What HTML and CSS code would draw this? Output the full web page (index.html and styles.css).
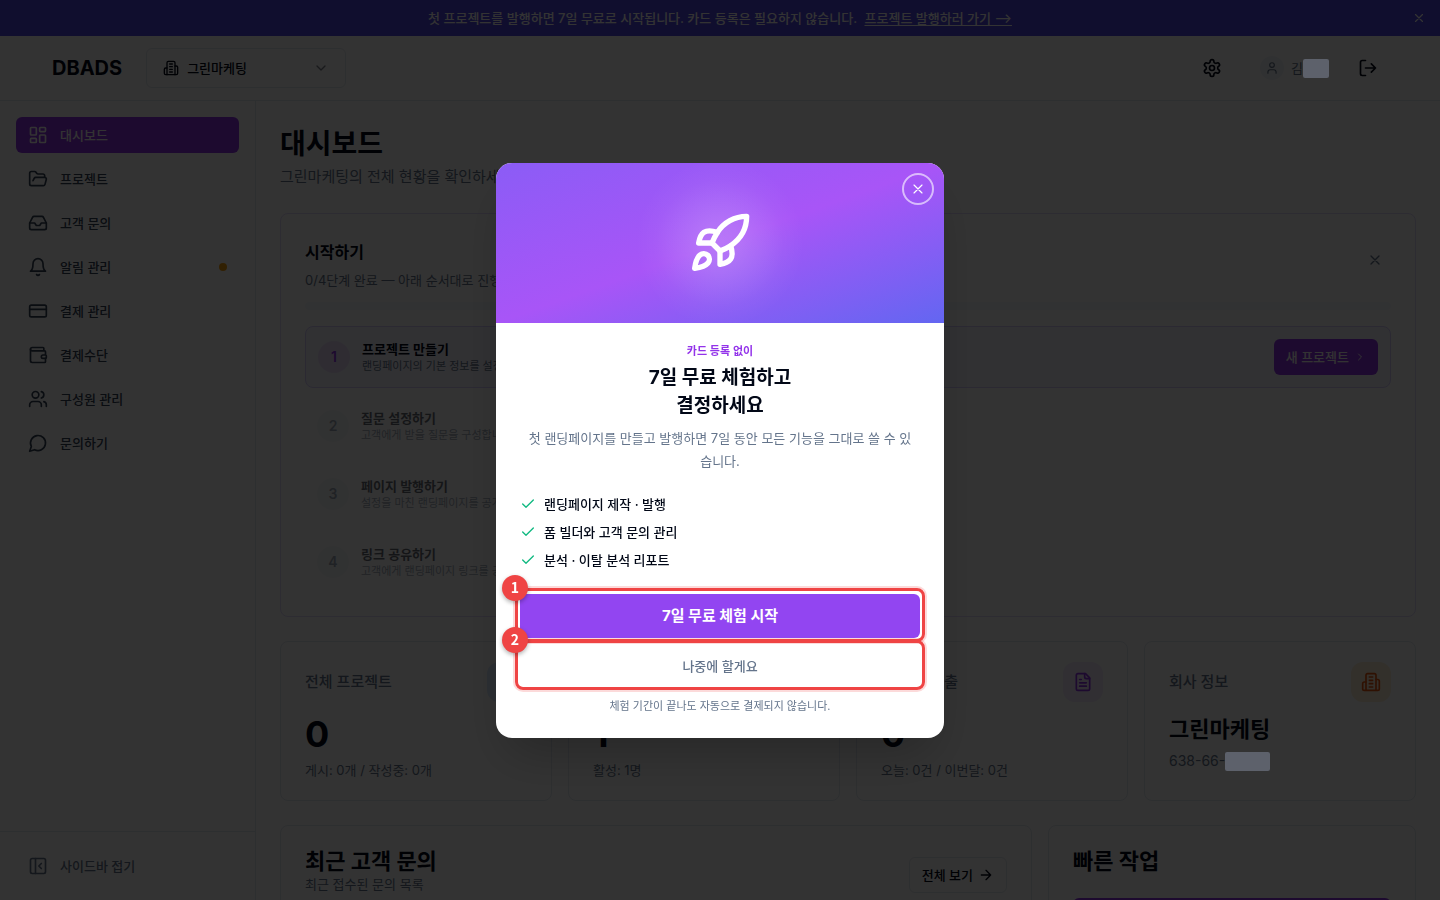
FILE: index.html
```html
<!DOCTYPE html>
<html lang="ko">
<head>
<meta charset="utf-8">
<meta name="viewport" content="width=device-width, initial-scale=1">
<title>DBADS 대시보드</title>
<link rel="stylesheet" href="styles.css">
</head>
<body>
<svg class="sprite" aria-hidden="true">
  <symbol id="i-x" viewBox="0 0 24 24"><path d="M18 6 6 18M6 6l12 12"/></symbol>
  <symbol id="i-building" viewBox="0 0 24 24"><path d="M6 22V4a2 2 0 0 1 2-2h8a2 2 0 0 1 2 2v18Z"/><path d="M6 12H4a2 2 0 0 0-2 2v6a2 2 0 0 0 2 2h2M18 9h2a2 2 0 0 1 2 2v9a2 2 0 0 1-2 2h-2M10 6h4M10 10h4M10 14h4M10 18h4"/></symbol>
  <symbol id="i-rocket" viewBox="0 0 24 24"><path d="M4.5 16.5c-1.5 1.26-2 5-2 5s3.74-.5 5-2c.71-.84.7-2.13-.09-2.91a2.18 2.18 0 0 0-2.91-.09z"/><path d="m12 15-3-3a22 22 0 0 1 2-3.95A12.88 12.88 0 0 1 22 2c0 2.72-.78 7.5-6 11a22.35 22.35 0 0 1-4 2z"/><path d="M9 12H4s.55-3.03 2-4c1.62-1.08 5 0 5 0M12 15v5s3.03-.55 4-2c1.08-1.62 0-5 0-5"/></symbol>
  <symbol id="i-check" viewBox="0 0 24 24"><path d="M20 6 9 17l-5-5"/></symbol>
</svg>

<div class="page">
  <div class="banner">
    <p class="banner-text">첫 프로젝트를 발행하면 7일 무료로 시작됩니다. 카드 등록은 필요하지 않습니다. <a href="#">프로젝트 발행하러 가기 ⟶</a></p>
    <button class="banner-close" aria-label="배너 닫기"><svg class="icon s14"><use href="#i-x"/></svg></button>
  </div>

  <header class="topbar">
    <a class="logo" href="#">DBADS</a>
    <button class="company">
      <svg class="icon s16"><use href="#i-building"/></svg>
      <span>그린마케팅</span>
      <svg class="icon s16 chevron" viewBox="0 0 24 24"><path d="m6 9 6 6 6-6"/></svg>
    </button>
    <div class="tools">
      <button class="tool" aria-label="설정"><svg class="icon s20" viewBox="0 0 24 24"><path d="M12.22 2h-.44a2 2 0 0 0-2 2v.18a2 2 0 0 1-1 1.73l-.43.25a2 2 0 0 1-2 0l-.15-.08a2 2 0 0 0-2.73.73l-.22.38a2 2 0 0 0 .73 2.73l.15.1a2 2 0 0 1 1 1.72v.51a2 2 0 0 1-1 1.74l-.15.09a2 2 0 0 0-.73 2.73l.22.38a2 2 0 0 0 2.73.73l.15-.08a2 2 0 0 1 2 0l.43.25a2 2 0 0 1 1 1.73V20a2 2 0 0 0 2 2h.44a2 2 0 0 0 2-2v-.18a2 2 0 0 1 1-1.73l.43-.25a2 2 0 0 1 2 0l.15.08a2 2 0 0 0 2.73-.73l.22-.39a2 2 0 0 0-.73-2.73l-.15-.08a2 2 0 0 1-1-1.74v-.5a2 2 0 0 1 1-1.74l.15-.09a2 2 0 0 0 .73-2.73l-.22-.38a2 2 0 0 0-2.73-.73l-.15.08a2 2 0 0 1-2 0l-.43-.25a2 2 0 0 1-1-1.73V4a2 2 0 0 0-2-2z"/><circle cx="12" cy="12" r="3"/></svg></button>
      <div class="user">
        <span class="avatar"><svg class="icon s14" viewBox="0 0 24 24"><path d="M19 21v-2a4 4 0 0 0-4-4H9a4 4 0 0 0-4 4v2"/><circle cx="12" cy="7" r="4"/></svg></span>
        <span class="user-name">김<span class="mask mask-name"></span></span>
      </div>
      <button class="tool" aria-label="로그아웃"><svg class="icon s20" viewBox="0 0 24 24"><path d="M9 21H5a2 2 0 0 1-2-2V5a2 2 0 0 1 2-2h4M16 17l5-5-5-5M21 12H9"/></svg></button>
    </div>
  </header>

  <div class="shell">
    <aside class="sidebar">
      <nav class="nav">
        <a class="nav-item active" href="#"><svg class="icon s20" viewBox="0 0 24 24"><rect x="3" y="3" width="7" height="9" rx="1"/><rect x="14" y="3" width="7" height="5" rx="1"/><rect x="14" y="12" width="7" height="9" rx="1"/><rect x="3" y="16" width="7" height="5" rx="1"/></svg>대시보드</a>
        <a class="nav-item" href="#"><svg class="icon s20" viewBox="0 0 24 24"><path d="m6 14 1.5-2.9A2 2 0 0 1 9.24 10H20a2 2 0 0 1 1.94 2.5l-1.54 6a2 2 0 0 1-1.95 1.5H4a2 2 0 0 1-2-2V5a2 2 0 0 1 2-2h3.9a2 2 0 0 1 1.69.9l.81 1.2a2 2 0 0 0 1.67.9H18a2 2 0 0 1 2 2v2"/></svg>프로젝트</a>
        <a class="nav-item" href="#"><svg class="icon s20" viewBox="0 0 24 24"><path d="M22 12h-6l-2 3h-4l-2-3H2"/><path d="M5.45 5.11 2 12v6a2 2 0 0 0 2 2h16a2 2 0 0 0 2-2v-6l-3.45-6.89A2 2 0 0 0 16.76 4H7.24a2 2 0 0 0-1.79 1.11z"/></svg>고객 문의</a>
        <a class="nav-item" href="#"><svg class="icon s20" viewBox="0 0 24 24"><path d="M6 8a6 6 0 0 1 12 0c0 7 3 9 3 9H3s3-2 3-9M10.3 21a1.94 1.94 0 0 0 3.4 0"/></svg>알림 관리<span class="dot"></span></a>
        <a class="nav-item" href="#"><svg class="icon s20" viewBox="0 0 24 24"><rect x="2" y="5" width="20" height="14" rx="2"/><path d="M2 10h20"/></svg>결제 관리</a>
        <a class="nav-item" href="#"><svg class="icon s20" viewBox="0 0 24 24"><path d="M19 7V4a1 1 0 0 0-1-1H5a2 2 0 0 0 0 4h15a1 1 0 0 1 1 1v4h-3a2 2 0 0 0 0 4h3a1 1 0 0 0 1-1v-2a1 1 0 0 0-1-1"/><path d="M3 5v14a2 2 0 0 0 2 2h15a1 1 0 0 0 1-1v-4"/></svg>결제수단</a>
        <a class="nav-item" href="#"><svg class="icon s20" viewBox="0 0 24 24"><path d="M16 21v-2a4 4 0 0 0-4-4H6a4 4 0 0 0-4 4v2"/><circle cx="9" cy="7" r="4"/><path d="M22 21v-2a4 4 0 0 0-3-3.87M16 3.13a4 4 0 0 1 0 7.75"/></svg>구성원 관리</a>
        <a class="nav-item" href="#"><svg class="icon s20" viewBox="0 0 24 24"><path d="M7.9 20A9 9 0 1 0 4 16.1L2 22Z"/></svg>문의하기</a>
      </nav>
      <div class="side-foot">
        <button class="nav-item fold"><svg class="icon s20" viewBox="0 0 24 24"><rect x="3" y="3" width="18" height="18" rx="2"/><path d="M9 3v18M16 15l-3-3 3-3"/></svg>사이드바 접기</button>
      </div>
    </aside>

    <main class="main">
      <h1>대시보드</h1>
      <p class="lead">그린마케팅의 전체 현황을 확인하세요</p>

      <section class="card start">
        <div class="start-head">
          <div>
            <h2>시작하기</h2>
            <p class="start-sub">0/4단계 완료 — 아래 순서대로 진행해 주세요</p>
          </div>
          <button class="start-close" aria-label="닫기"><svg class="icon s16"><use href="#i-x"/></svg></button>
        </div>
        <div class="progress"></div>
        <ol class="steps">
          <li class="step current">
            <span class="num">1</span>
            <div class="step-text"><strong>프로젝트 만들기</strong><span>랜딩페이지의 기본 정보를 설정합니다</span></div>
            <button class="new-project">새 프로젝트 <svg class="icon s12" viewBox="0 0 24 24"><path d="m9 18 6-6-6-6"/></svg></button>
          </li>
          <li class="step"><span class="num">2</span><div class="step-text"><strong>질문 설정하기</strong><span>고객에게 받을 질문을 구성합니다</span></div></li>
          <li class="step"><span class="num">3</span><div class="step-text"><strong>페이지 발행하기</strong><span>설정을 마친 랜딩페이지를 공개합니다</span></div></li>
          <li class="step"><span class="num">4</span><div class="step-text"><strong>링크 공유하기</strong><span>고객에게 랜딩페이지 링크를 공유합니다</span></div></li>
        </ol>
      </section>

      <section class="stats">
        <article class="card stat">
          <div class="stat-head"><h3>전체 프로젝트</h3><span class="tile blue"></span></div>
          <p class="value">0</p><p class="hint">게시: 0개 / 작성중: 0개</p>
        </article>
        <article class="card stat">
          <div class="stat-head"><h3>구성원</h3><span class="tile green"></span></div>
          <p class="value">1</p><p class="hint">활성: 1명</p>
        </article>
        <article class="card stat">
          <div class="stat-head"><h3>총 문의 제출</h3><span class="tile purple"><svg class="icon s20" viewBox="0 0 24 24"><path d="M15 2H6a2 2 0 0 0-2 2v16a2 2 0 0 0 2 2h12a2 2 0 0 0 2-2V7Z"/><path d="M14 2v4a2 2 0 0 0 2 2h4M10 9H8M16 13H8M16 17H8"/></svg></span></div>
          <p class="value">0</p><p class="hint">오늘: 0건 / 이번달: 0건</p>
        </article>
        <article class="card stat">
          <div class="stat-head"><h3>회사 정보</h3><span class="tile orange"><svg class="icon s20"><use href="#i-building"/></svg></span></div>
          <p class="firm">그린마케팅</p><p class="hint biz">638-66-<span class="mask mask-biz"></span></p>
        </article>
      </section>

      <section class="bottom">
        <article class="card recent">
          <div><h2 class="big">최근 고객 문의</h2><p class="recent-sub">최근 접수된 문의 목록</p></div>
          <button class="all">전체 보기 <svg class="icon s16" viewBox="0 0 24 24"><path d="M5 12h14M12 5l7 7-7 7"/></svg></button>
        </article>
        <article class="card quick">
          <h2 class="big">빠른 작업</h2>
          <button class="quick-btn" aria-label="새 프로젝트 만들기"></button>
        </article>
      </section>
    </main>
  </div>
</div>

<div class="overlay">
  <div class="modal" role="dialog" aria-modal="true" aria-labelledby="modal-title">
    <div class="hero">
      <svg class="icon rocket"><use href="#i-rocket"/></svg>
      <button class="modal-close" aria-label="닫기"><svg class="icon s16"><use href="#i-x"/></svg></button>
    </div>
    <div class="modal-body">
      <p class="eyebrow">카드 등록 없이</p>
      <h2 class="modal-title" id="modal-title">7일 무료 체험하고<br>결정하세요</h2>
      <p class="desc">첫 랜딩페이지를 만들고 발행하면 7일 동안 모든 기능을 그대로 쓸 수 있습니다.</p>
      <ul class="features">
        <li><svg class="icon s16"><use href="#i-check"/></svg>랜딩페이지 제작 · 발행</li>
        <li><svg class="icon s16"><use href="#i-check"/></svg>폼 빌더와 고객 문의 관리</li>
        <li><svg class="icon s16"><use href="#i-check"/></svg>분석 · 이탈 분석 리포트</li>
      </ul>
      <div class="actions">
        <div class="action"><button class="primary">7일 무료 체험 시작</button><span class="ring"></span><span class="badge">1</span></div>
        <div class="action"><button class="later">나중에 할게요</button><span class="ring"></span><span class="badge">2</span></div>
      </div>
      <p class="foot">체험 기간이 끝나도 자동으로 결제되지 않습니다.</p>
    </div>
  </div>
</div>
</body>
</html>
```
FILE: styles.css
```css
* { box-sizing: border-box; margin: 0; padding: 0; }

body {
  font-family: Inter, "Noto Sans CJK KR", sans-serif;
  font-size: 13px;
  line-height: 20px;
  color: #020817;
  background: #fff;
  overflow: hidden;
}

button { font: inherit; color: inherit; background: none; border: 0; }
a { color: inherit; text-decoration: none; }
ul, ol { list-style: none; }
h1, h2, h3, strong { font-weight: 700; }

.sprite { position: absolute; width: 0; height: 0; }
.icon { flex: none; fill: none; stroke: currentColor; stroke-width: 2; stroke-linecap: round; stroke-linejoin: round; }
.s12 { width: 12px; height: 12px; }
.s14 { width: 14px; height: 14px; }
.s16 { width: 16px; height: 16px; }
.s20 { width: 20px; height: 20px; }

.page { display: flex; flex-direction: column; height: 100vh; overflow: hidden; }

/* Banner */
.banner { flex: none; display: flex; align-items: center; height: 36px; padding: 0 14px; background: #4f46e5; color: #fff; }
.banner-text { flex: 1; text-align: center; font-weight: 500; padding-left: 14px; }
.banner-text a { margin-left: 4px; text-decoration: underline; text-underline-offset: 2px; }
.banner-close { display: flex; }

/* Header */
.topbar { flex: none; display: flex; align-items: center; height: 65px; padding: 0 52px; border-bottom: 1px solid #e2e8f0; }
.logo { font-size: 20px; font-weight: 700; }
.company { display: flex; align-items: center; gap: 8px; width: 200px; height: 40px; margin-left: 24px; padding: 0 16px; border: 1px solid #e2e8f0; border-radius: 6px; font-weight: 500; }
.chevron { margin-left: auto; opacity: .5; }
.tools { display: flex; align-items: center; margin-left: auto; }
.tool { display: grid; place-items: center; width: 40px; height: 40px; }
.user { display: flex; align-items: center; gap: 7px; margin: 0 19px 0 28px; color: #64748b; }
.avatar { display: grid; place-items: center; width: 24px; height: 24px; border-radius: 50%; background: #f1f5f9; }
.user-name { display: flex; align-items: center; }
.mask { position: relative; z-index: 60; height: 19px; border-radius: 2px; background: #5d616b; }
.mask-name { width: 26px; }
.mask-biz { width: 45px; }

/* Sidebar */
.shell { flex: 1; display: flex; min-height: 0; }
.sidebar { flex: none; display: flex; flex-direction: column; width: 256px; border-right: 1px solid #e2e8f0; }
.nav { flex: 1; display: flex; flex-direction: column; gap: 8px; padding: 16px; }
.nav-item { display: flex; align-items: center; gap: 12px; width: 100%; height: 36px; padding: 0 12px; border-radius: 6px; font-weight: 500; color: #334155; }
.nav-item.active { background: #9333ea; color: #fff; }
.dot { width: 8px; height: 8px; margin-left: auto; border-radius: 50%; background: #f59e0b; }
.side-foot { padding: 16px; border-top: 1px solid #e2e8f0; }
.nav-item.fold { color: #64748b; }

/* Main column */
.main { flex: 1; min-width: 0; padding: 24px; overflow: hidden; }
h1 { font-size: 28px; line-height: 38px; }
.lead { margin: 2px 0 24px; font-size: 15px; line-height: 24px; color: #64748b; }
.card { border: 1px solid #e2e8f0; border-radius: 8px; background: #fff; }

.start { padding: 24px; border-color: #e2d9fb; }
.start-head { display: flex; justify-content: space-between; align-items: flex-start; }
.start-head h2 { font-size: 16px; line-height: 28px; }
.start-sub { margin-top: 4px; color: #64748b; }
.start-close { display: grid; place-items: center; width: 32px; height: 44px; color: #64748b; }
.progress { height: 8px; margin: 12px 0 16px; border-radius: 4px; background: #f5f8fc; }
.steps { display: flex; flex-direction: column; gap: 8px; }
.step { display: flex; align-items: center; gap: 12px; height: 60px; padding: 0 12px; border-radius: 8px; opacity: .6; }
.step.current { height: 62px; border: 1px solid #d5ccfb; background: #f5f3ff; opacity: 1; }
.num { display: grid; place-items: center; width: 32px; height: 32px; border-radius: 50%; background: #f1f5f9; color: #64748b; font-size: 14px; font-weight: 600; }
.current .num { background: #e9ddfb; color: #9333ea; }
.step-text { flex: 1; display: flex; flex-direction: column; }
.step-text strong { line-height: 18px; font-weight: 600; }
.step-text span { font-size: 11px; line-height: 16px; color: #64748b; }
.new-project { display: flex; align-items: center; gap: 5px; height: 36px; padding: 0 12px; border-radius: 6px; background: #9333ea; color: #fff; font-weight: 500; }

.stats { display: grid; grid-template-columns: repeat(4, 1fr); gap: 16px; margin-top: 24px; }
.stat { height: 160px; padding: 20px 24px; }
.stat-head { display: flex; align-items: center; justify-content: space-between; }
.stat-head h3 { font-size: 15px; font-weight: 500; color: #64748b; }
.tile { display: grid; place-items: center; width: 40px; height: 40px; border-radius: 12px; }
.blue { background: #dbeafe; }
.green { background: #dcfce7; }
.purple { background: #f3e8ff; color: #9333ea; }
.orange { background: #ffedd5; color: #ea580c; }
.value { margin-top: 12px; font-size: 36px; line-height: 40px; font-weight: 700; }
.firm { margin-top: 11px; font-size: 22px; line-height: 32px; font-weight: 700; }
.hint { margin-top: 6px; color: #64748b; }
.biz { display: flex; align-items: center; font-size: 14px; }

.bottom { display: grid; grid-template-columns: repeat(3, 1fr); gap: 16px; margin-top: 24px; }
.bottom .card { padding: 20px 24px; }
.recent { grid-column: span 2; display: flex; justify-content: space-between; align-items: flex-start; }
.big { font-size: 22px; line-height: 30px; }
.recent-sub { line-height: 16px; color: #64748b; }
.all { display: flex; align-items: center; gap: 5px; height: 36px; margin-top: 11px; padding: 0 12px; border: 1px solid #e2e8f0; border-radius: 6px; font-weight: 500; }
.quick-btn { width: 100%; height: 40px; margin-top: 22px; border-radius: 6px; background: #9333ea; }

/* Modal */
.overlay { position: fixed; inset: 0; z-index: 50; display: grid; place-items: center; background: rgba(0, 0, 0, .8); }
.modal { width: 448px; max-width: 100%; border-radius: 16px; background: #fff; box-shadow: 0 25px 50px -12px rgba(0, 0, 0, .25); }
.hero {
  position: relative;
  display: grid;
  place-items: center;
  height: 160px;
  border-radius: 16px 16px 0 0;
  color: #fff;
  background:
    radial-gradient(circle at center, rgba(255, 255, 255, .2), rgba(255, 255, 255, .17) 20px, rgba(255, 255, 255, .1) 42px, rgba(255, 255, 255, .03) 64px, rgba(255, 255, 255, 0) 84px),
    linear-gradient(to bottom right, #8b5cf6, #a855f7, #6366f1);
}
.rocket { width: 64px; height: 64px; }
.modal-close { position: absolute; top: 10px; right: 10px; display: grid; place-items: center; width: 32px; height: 32px; border: 2px solid rgba(255, 255, 255, .6); border-radius: 50%; }
.modal-close .icon { stroke-width: 1.75; }
.modal-body { padding: 20px 24px 24px; text-align: center; }
.eyebrow { font-size: 11px; line-height: 16px; font-weight: 600; color: #9333ea; }
.modal-title { margin-top: 5px; font-size: 19px; line-height: 28px; }
.desc { margin-top: 7px; padding: 0 4px; line-height: 23px; color: #64748b; }
.features { display: flex; flex-direction: column; gap: 8px; margin: 21px 0 24px; }
.features li { display: flex; align-items: center; gap: 8px; font-weight: 500; }
.features .icon { color: #10b981; }
.actions { display: flex; flex-direction: column; gap: 8px; }
.action { position: relative; }
.action button { display: block; width: 100%; border-radius: 6px; }
.primary { height: 44px; background: #9245f1; color: #fff; font-size: 15px; font-weight: 700; }
.action .later { height: 40px; color: #64748b; font-weight: 500; }
.ring { position: absolute; inset: -6px -5px -4px; border: 3px solid #ef4444; border-radius: 8px; box-shadow: 0 0 0 2px rgba(239, 68, 68, .2); pointer-events: none; }
.badge { position: absolute; top: -19px; left: -18px; z-index: 1; width: 26px; height: 26px; border-radius: 50%; background: #ef4444; color: #fff; font-family: "Noto Sans CJK KR", sans-serif; font-size: 14px; line-height: 24px; font-weight: 700; box-shadow: 0 2px 4px rgba(0, 0, 0, .3); }
.foot { margin-top: 12px; font-size: 11px; line-height: 16px; color: #64748b; }
```
